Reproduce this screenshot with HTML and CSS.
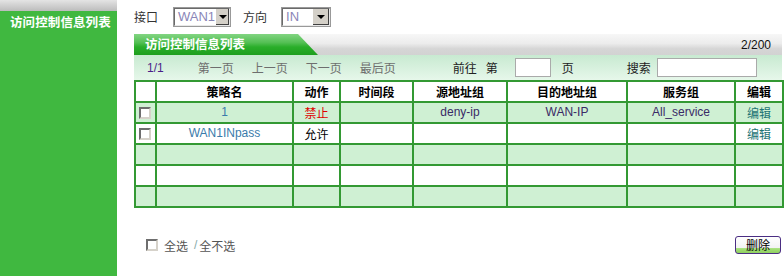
FILE: index.html
```html
<!DOCTYPE html>
<html lang="zh">
<head>
<meta charset="utf-8">
<title>访问控制信息列表</title>
<link rel="stylesheet" href="styles.css">
</head>
<body>
<div class="page">
  <aside class="sidebar">
    <div class="sidebar-title">访问控制信息列表</div>
  </aside>
  <main class="main">
    <div class="filters">
      <span class="label">接口</span>
      <span class="select sel-wan"><span class="sel-text">WAN1</span><span class="sel-btn"><i class="tri"></i></span></span>
      <span class="label label-dir">方向</span>
      <span class="select sel-in"><span class="sel-text">IN</span><span class="sel-btn"><i class="tri"></i></span></span>
    </div>

    <div class="panel-head">
      <div class="tab">访问控制信息列表</div>
      <div class="count">2/200</div>
    </div>

    <div class="pager">
      <span class="pg-cur">1/1</span>
      <span class="pg-link pg-first">第一页</span>
      <span class="pg-link">上一页</span>
      <span class="pg-link">下一页</span>
      <span class="pg-link">最后页</span>
      <span class="pg-text pg-goto">前往</span>
      <span class="pg-text pg-di">第</span>
      <span class="pg-input pg-input-page"></span>
      <span class="pg-text pg-ye">页</span>
      <span class="pg-text pg-search">搜索</span>
      <span class="pg-input pg-input-search"></span>
    </div>

    <table class="rules">
      <colgroup>
        <col class="c-chk"><col class="c-name"><col class="c-act"><col class="c-time"><col class="c-src"><col class="c-dst"><col class="c-svc"><col class="c-edit">
      </colgroup>
      <thead>
        <tr>
          <th></th><th>策略名</th><th>动作</th><th>时间段</th><th>源地址组</th><th>目的地址组</th><th>服务组</th><th>编辑</th>
        </tr>
      </thead>
      <tbody>
        <tr class="alt">
          <td class="chk-cell"><span class="chk"></span></td>
          <td class="name">1</td>
          <td class="deny">禁止</td>
          <td></td>
          <td class="val">deny-ip</td>
          <td class="val">WAN-IP</td>
          <td class="val">All_service</td>
          <td class="edit">编辑</td>
        </tr>
        <tr>
          <td class="chk-cell"><span class="chk"></span></td>
          <td class="name">WAN1INpass</td>
          <td class="allow">允许</td>
          <td></td><td></td><td></td><td></td>
          <td class="edit">编辑</td>
        </tr>
        <tr class="alt"><td></td><td></td><td></td><td></td><td></td><td></td><td></td><td></td></tr>
        <tr><td></td><td></td><td></td><td></td><td></td><td></td><td></td><td></td></tr>
        <tr class="alt"><td></td><td></td><td></td><td></td><td></td><td></td><td></td><td></td></tr>
      </tbody>
    </table>

    <div class="footer">
      <div class="select-all">
        <span class="chk"></span>
        <span class="sa-text">全选</span>
        <span class="sa-sep">/</span>
        <span class="sa-text">全不选</span>
      </div>
      <button class="btn-del" type="button">删除</button>
    </div>
  </main>
</div>
</body>
</html>
```

FILE: styles.css
```css
html, body {
  margin: 0;
  padding: 0;
  background: #ffffff;
}
body {
  font-family: "Liberation Sans", Arial, "Noto Sans CJK SC", sans-serif;
  font-size: 12px;
  color: #000;
}
.page {
  display: flex;
  height: 276px;
  overflow: hidden;
}
.sidebar {
  width: 117px;
  flex: none;
  background: linear-gradient(#e4e4e4, #bcbcbc) top / 100% 11px no-repeat, #40b840;
}
.sidebar-title {
  padding: 15px 0 0 10px;
  color: #fff;
  font-family: "Noto Sans CJK SC", sans-serif;
  font-weight: 700;
  font-size: 12.5px;
  line-height: 14px;
  letter-spacing: 0.1px;
  white-space: nowrap;
}
.main {
  flex: 1;
  padding: 0 2px 0 17px;
  display: flex;
  flex-direction: column;
}

/* filters */
.filters {
  display: flex;
  align-items: center;
  height: 33px;
  padding-top: 1px;
  box-sizing: border-box;
}
.label {
  font-family: "Noto Sans CJK SC", sans-serif;
  font-size: 12px;
  color: #333;
  line-height: 14px;
}
.select {
  display: inline-flex;
  height: 20px;
  box-sizing: border-box;
  border: 2px solid;
  border-color: #6a6a6a #e8e8e8 #e8e8e8 #6a6a6a;
  outline: 1px solid #999;
  outline-offset: -1px;
  background: #fff;
}
.sel-wan { width: 58px; margin-left: 15px; }
.sel-in { width: 50px; margin-left: 14px; }
.label-dir { margin-left: 12px; }
.sel-text {
  flex: 1;
  font-size: 13px;
  line-height: 16px;
  color: #8a86b8;
  padding-left: 3px;
}
.sel-btn {
  width: 16px;
  background: #d4d0c8;
  border-left: 1px solid #fff;
  box-shadow: inset -1px -1px #404040;
  display: flex;
  align-items: center;
  justify-content: center;
}
.tri {
  width: 0;
  height: 0;
  border-left: 4px solid transparent;
  border-right: 4px solid transparent;
  border-top: 4px solid #000;
}

/* panel header */
.panel-head {
  margin-top: 1px;
  height: 21px;
  display: flex;
  justify-content: space-between;
  align-items: center;
  background: linear-gradient(#f7f7f7 0%, #ececec 45%, #d6d6d6 70%, #d2d2d2 100%);
  width: 648px;
}
.tab {
  align-self: stretch;
  width: 184px;
  box-sizing: border-box;
  padding: 2px 0 0 11px;
  clip-path: polygon(0 0, 164px 0, 184px 100%, 0 100%);
  background: linear-gradient(#82d582 0%, #55c055 40%, #2aae2a 62%, #1e9e1e 100%);
  color: #fff;
  font-family: "Noto Sans CJK SC", sans-serif;
  font-weight: 700;
  font-size: 12.5px;
  line-height: 15px;
  white-space: nowrap;
}
.count {
  padding-right: 11px;
  font-size: 12px;
  color: #111;
}

/* pager */
.pager {
  width: 648px;
  height: 25px;
  display: flex;
  align-items: center;
  background: linear-gradient(#c8ead1, #e6f7ea);
  font-family: "Noto Sans CJK SC", "Liberation Sans", sans-serif;
  font-size: 12px;
}
.pg-cur {
  margin-left: 13px;
  font-family: "Liberation Sans", Arial, sans-serif;
  color: #4b1f8a;
}
.pg-link {
  color: #6e6e6e;
  margin-left: 18px;
}
.pg-first { margin-left: 34px; }
.pg-text { color: #222; }
.pg-goto { margin-left: 57px; }
.pg-di { margin-left: 9px; }
.pg-input {
  height: 19px;
  box-sizing: border-box;
  border: 1px solid #aaa;
  background: #fff;
}
.pg-input-page { width: 36px; margin-left: 17px; }
.pg-ye { margin-left: 11px; }
.pg-search { margin-left: 53px; }
.pg-input-search { width: 100px; margin-left: 6px; }

/* table */
.rules {
  width: 648px;
  border-collapse: collapse;
  table-layout: fixed;
  border: 2px solid #339933;
}
.c-chk { width: 21px; }
.c-name { width: 137px; }
.c-act { width: 47px; }
.c-time { width: 73px; }
.c-src { width: 94px; }
.c-dst { width: 120px; }
.c-svc { width: 108px; }
.c-edit { width: 48px; }
.rules th, .rules td {
  border: 2px solid #339933;
  height: 19px;
  padding: 0;
  text-align: center;
  font-size: 12px;
  line-height: 19px;
  white-space: nowrap;
}
.rules th {
  font-family: "Noto Sans CJK SC", sans-serif;
  font-weight: 700;
  background: #fff;
  color: #000;
}
.rules tr.alt td { background: #cff0d3; }
.rules tbody tr:not(.alt) td { background: #fff; }
.rules td.name { color: #3a7bab; }
.rules td.deny { color: #e00000; font-family: "Noto Sans CJK SC", sans-serif; }
.rules td.allow { color: #000; font-family: "Noto Sans CJK SC", sans-serif; }
.rules td.val { color: #3a2a66; }
.rules td.edit { color: #1e7474; font-family: "Noto Sans CJK SC", sans-serif; }
.rules td.chk-cell { text-align: left; padding-left: 3px; }

.chk {
  display: inline-block;
  width: 12px;
  height: 12px;
  box-sizing: border-box;
  border: 2px solid;
  border-color: #6e6e6e #d6d2ca #d6d2ca #6e6e6e;
  background: #fff;
  vertical-align: middle;
}

/* footer */
.footer {
  width: 648px;
  display: flex;
  justify-content: space-between;
  align-items: center;
  margin-top: 28px;
}
.select-all {
  display: flex;
  align-items: center;
  margin-left: 12px;
  font-family: "Noto Sans CJK SC", sans-serif;
  color: #555;
  font-size: 12px;
}
.select-all .chk { margin-right: 6px; }
.sa-sep { margin: 0 2px 0 6px; font-family: "Liberation Sans", sans-serif; color: #8aa; }
.btn-del {
  width: 46px;
  height: 18px;
  margin-right: 1px;
  padding: 0;
  border: 1px solid #4b2e83;
  border-radius: 3px;
  background: linear-gradient(#ffffff 0%, #f2f2f2 70%, #a6e07a 72%, #8fd060 100%);
  font-family: "Noto Sans CJK SC", sans-serif;
  font-size: 12px;
  line-height: 14px;
  color: #000;
}
```
